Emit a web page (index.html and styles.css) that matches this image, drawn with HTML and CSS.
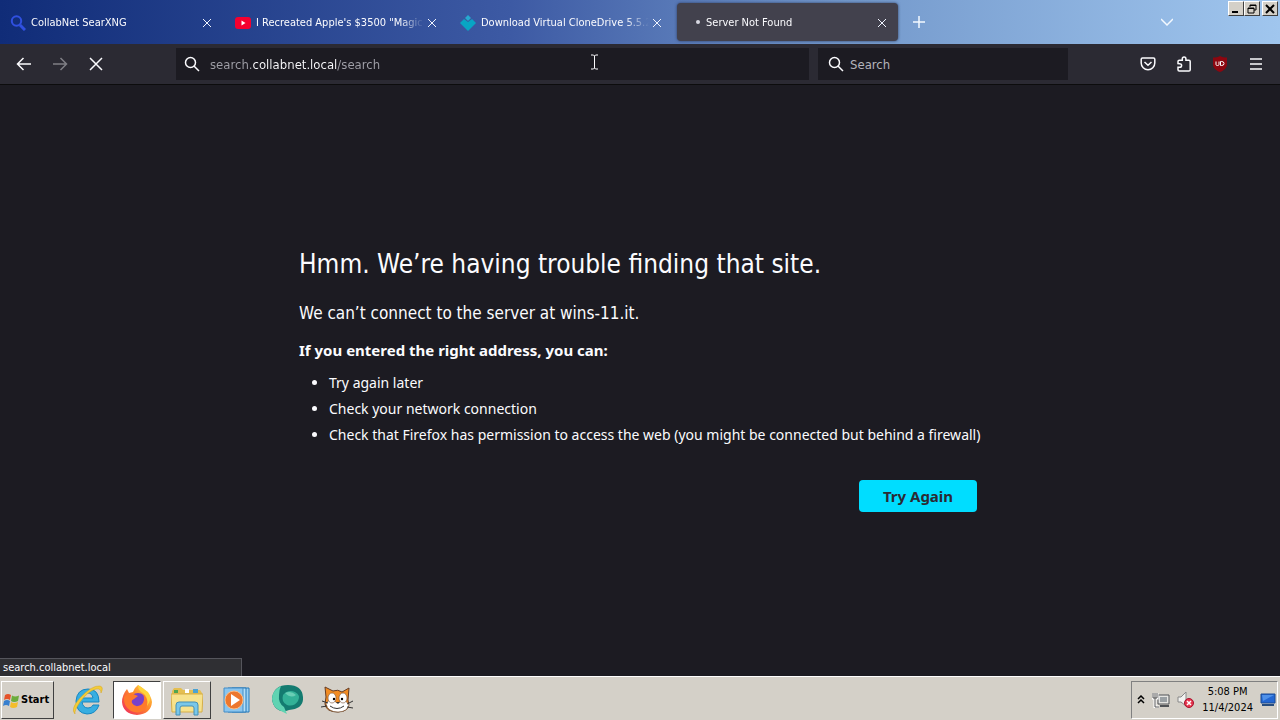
FILE: index.html
```
<!DOCTYPE html>
<html lang="en">
<head>
<meta charset="utf-8">
<title>Server Not Found</title>
<link rel="stylesheet" href="styles.css">
</head>
<body>
<div class="tabbar">
  <div class="tabs">
    <div class="tab">
      <svg class="icon" viewBox="0 0 16 16" fill="none" stroke="#3050e0"><circle cx="6.500" cy="6" r="4.700" stroke-width="2"/><path d="M10 10l5 5" stroke-width="3"/></svg>
      <span class="tab-title">CollabNet SearXNG</span>
      <button class="tab-close" aria-label="Close tab"><svg viewBox="0 0 10 10"><path d="M1 1l8 8M9 1l-8 8"/></svg></button>
    </div>
    <div class="tab">
      <svg class="icon" viewBox="0 0 16 16"><rect y="2" width="16" height="12" rx="3" fill="#f5002f"/><path d="M6.500 5.500v5l4-2.500z" fill="#fff"/></svg>
      <span class="tab-title">I Recreated Apple's $3500 "Magica</span>
      <button class="tab-close" aria-label="Close tab"><svg viewBox="0 0 10 10"><path d="M1 1l8 8M9 1l-8 8"/></svg></button>
    </div>
    <div class="tab">
      <svg class="icon" viewBox="0 0 16 16"><path d="M8 0l3 3-3 3-3-3z" fill="#26a9cf"/><path d="M0 8l4-4 4 3 4-3 4 4-8 8z" fill="#08a5c4"/></svg>
      <span class="tab-title">Download Virtual CloneDrive 5.5.2</span>
      <button class="tab-close" aria-label="Close tab"><svg viewBox="0 0 10 10"><path d="M1 1l8 8M9 1l-8 8"/></svg></button>
    </div>
    <div class="tab active">
      <svg class="icon" viewBox="0 0 16 16"><circle cx="13" cy="7" r="2" fill="#d8d8e2"/></svg>
      <span class="tab-title">Server Not Found</span>
      <button class="tab-close" aria-label="Close tab"><svg viewBox="0 0 10 10"><path d="M1 1l8 8M9 1l-8 8"/></svg></button>
    </div>
  </div>
  <button class="tab-tool" aria-label="New tab"><svg viewBox="0 0 12 12" width="12" height="12"><path d="M6 0v12M0 6h12"/></svg></button>
  <button class="tab-tool all-tabs" aria-label="List all tabs"><svg viewBox="0 0 12 12" width="12" height="12"><path d="M0 3l6 6 6-6"/></svg></button>
  <div class="window-buttons">
    <button aria-label="Minimize"><svg viewBox="0 0 14 12"><path d="M3 9h6" stroke-width="2"/></svg></button>
    <button aria-label="Restore"><svg viewBox="0 0 14 12"><path d="M5 4V2h6v5H9M5 2.500h6M3 5h6v5H3zM3 5.500h6"/></svg></button>
    <button class="win-close" aria-label="Close"><svg viewBox="0 0 14 12"><path d="M3 2l8 8M11 2l-8 8" stroke-width="2"/></svg></button>
  </div>
</div>

<div class="toolbar">
  <button class="tool" aria-label="Back"><svg viewBox="0 0 16 16"><path d="M15 8H1.500M7.500 2l-6 6 6 6"/></svg></button>
  <button class="tool" aria-label="Forward" disabled><svg viewBox="0 0 16 16"><path d="M1 8h13.500M8.500 2l6 6-6 6"/></svg></button>
  <button class="tool" aria-label="Stop"><svg viewBox="0 0 16 16"><path d="M2 2l12 12M14 2L2 14"/></svg></button>
  <div class="spacer"></div>
  <label class="field address">
    <svg viewBox="0 0 16 16"><circle cx="6.500" cy="6.500" r="5"/><path d="M10 10l5 5"/></svg>
    <input class="url" type="text" aria-label="Address" value="search.collabnet.local/search">
    <svg class="ibeam" viewBox="0 0 9 16"><path d="M1 1h2.500l1 1 1-1H8M4.500 2v12M1 15h2.500l1-1 1 1H8"/></svg>
  </label>
  <label class="field searchbox">
    <svg viewBox="0 0 16 16"><circle cx="6.500" cy="6.500" r="5"/><path d="M10 10l5 5"/></svg>
    <input type="text" aria-label="Search" placeholder="Search">
  </label>
  <div class="spacer"></div>
  <button class="tool" aria-label="Save to Pocket"><svg viewBox="0 0 16 16"><path d="M2.500 2h11c.8 0 1.300.5 1.300 1.300V7a6.800 6.800 0 0 1-13.600 0V3.300C1.200 2.500 1.700 2 2.500 2zM4.500 6L8 9.200 11.500 6"/></svg></button>
  <button class="tool" aria-label="Extensions"><svg viewBox="0 0 16 16"><path d="M2 7.500V5.500C2 4.700 2.500 4.200 3.300 4.200H6.300V2.700a1.800 1.800 0 0 1 3.600 0v1.500h3c.8 0 1.300.5 1.300 1.300v8.200c0 .8-.5 1.300-1.300 1.300H3.300c-.8 0-1.300-.5-1.300-1.300V11.300h1.800a1.800 1.800 0 0 0 0-3.600z"/></svg></button>
  <button class="tool" aria-label="uBlock Origin"><svg class="ublock" viewBox="0 0 16 16"><path d="M8 0c2 1.200 4.500 1.500 7 1.500v6.500c0 4-3 6.500-7 8-4-1.500-7-4-7-8V1.500C3.500 1.500 6 1.200 8 0z" fill="#8c0610"/><path d="M4 5.500v3q0 1 1.500 1t1.500-1v-3M8.500 9.500v-4h1.200q2.300 0 2.300 2t-2.300 2z" fill="none" stroke="#fff"/></svg></button>
  <button class="tool" aria-label="Menu"><svg viewBox="0 0 16 16"><path d="M2 3h12M2 8h12M2 13h12"/></svg></button>
</div>

<main class="page">
  <div class="error">
    <h1>Hmm. We’re having trouble finding that site.</h1>
    <p class="lead">We can’t connect to the server at wins-11.it.</p>
    <p class="hint">If you entered the right address, you can:</p>
    <ul>
      <li>Try again later</li>
      <li>Check your network connection</li>
      <li>Check that Firefox has permission to access the web (you might be connected but behind a firewall)</li>
    </ul>
    <button class="retry">Try Again</button>
  </div>
  <div class="status">search.collabnet.local</div>
</main>

<div class="taskbar">
  <button class="start">
    <svg viewBox="0 0 18 18" width="18" height="18"><path d="M2 4q3-2 6 0L7 9Q4 7 1 9z" fill="#e5532a"/><path d="M9 4.500q3 2 7 0L15 10q-4 2-7 0z" fill="#6cac3c"/><path d="M1 10q3-2 6 0l-1 5q-3-2-6 0z" fill="#377fce"/><path d="M8 11q3 2 7 0l-1 5q-4 2-7 0z" fill="#f4bd2c"/></svg>
    Start
  </button>
  <button class="task" aria-label="Internet Explorer"><svg viewBox="0 0 32 32"><path d="M28 18H11q1 6 6 6 4 0 5-3h6q-3 9-12 9Q5 29 5 17 6 5 17 5t11 13zM11 14h11q-1-5-5-5t-6 5z" fill="#38aee1" stroke="#1687c2"/><path d="M4 30Q-1 25 9 14 21 1 29 2q4 1 1 7 0-5-5-4Q17 7 9 18 3 27 4 30z" fill="#f3cc39" stroke="#d6a51c" stroke-width=".5"/></svg></button>
  <button class="task current" aria-label="Firefox"><svg viewBox="0 0 32 32"><defs><linearGradient id="fx" x1="1" y1="0" x2="0" y2="1"><stop offset="0" stop-color="#ffe44a"/><stop offset=".45" stop-color="#ff892b"/><stop offset="1" stop-color="#ed2260"/></linearGradient></defs><path d="M17 1q7 4 9 8 4 2 5 9-1 12-15 13Q2 30 1 18 1 11 6 5l2 4 4-1q1-4 5-7z" fill="url(#fx)"/><circle cx="17" cy="17" r="8" fill="#7941c9"/><path d="M3 13q4-5 9-3l5 2-4 3q-3 1-2 4 3 5 9 2 5-4 2-11 7 6 3 14-6 7-15 3-8-5-7-14z" fill="#ff7a2c"/><path d="M17 1q0 6 5 8 6 4 4 13 6-8 1-14-4-3-10-7z" fill="#ffd53c"/></svg></button>
  <button class="task running" aria-label="File Explorer"><svg viewBox="0 0 32 32"><path d="M1 7l2-3h7l2 2h17l2 3v18H1z" fill="#e5bf51"/><path d="M3 6h4v3H3z" fill="#51a550"/><path d="M14 5h4v4h-4z" fill="#fff"/><path d="M22 5h5v4h-5z" fill="#4ca3d2"/><path d="M0 10h32l-1 18H1z" fill="#f7e28c" stroke="#d5ae48"/><path d="M5 31V21q0-3 3-3h16q3 0 3 3v10h-4v-7q0-2-2-2H11q-2 0-2 2v7z" fill="#79c7e9" stroke="#448fb6"/></svg></button>
  <button class="task" aria-label="Media Player"><svg viewBox="0 0 32 32"><path d="M11 4h17v24H11z" fill="#9bd1f3" stroke="#2579b9"/><path d="M7 4h18v24H7z" fill="#b5dff7" stroke="#2579b9"/><path d="M3 4h19v24H3z" fill="#89c5ef" stroke="#448cc5"/><circle cx="13" cy="16" r="9" fill="#ed772d" stroke="#ffbd83"/><path d="M10 10v12l9-6z" fill="#fff"/></svg></button>
  <button class="task" aria-label="Chat"><svg viewBox="0 0 32 32"><path d="M1 14Q3 1 17 1t15 12-14 13Q11 29 6 25 1 21 1 14z" fill="#147b70"/><path d="M10 2Q1 6 1 15q1 8 7 11l8 4-3-7Q7 19 8 11q0-5 2-9z" fill="#60d3b2"/><path d="M12 11q5-6 12-3 6 3 3 9-4 6-11 4-6-3-4-10z" fill="#33b197"/><path d="M14 9q6-3 11 2-5 4-11-2z" fill="#69ceb5"/></svg></button>
  <button class="task" aria-label="Scratch"><svg viewBox="0 0 32 32"><path d="M5 13L4 3l8 4q5-2 9 1l7-4-1 12q4 11-10 12Q5 28 4 20z" fill="#f28c23" stroke="#653c24"/><path d="M5 20q4-8 11-1 9-5 12 2-2 7-11 7-10 0-12-8z" fill="#fff" stroke="#704826" stroke-width=".6"/><ellipse cx="11" cy="14" rx="4" ry="5" fill="#fff" stroke="#714a30" stroke-width=".6"/><ellipse cx="22" cy="14" rx="4" ry="5" fill="#fff" stroke="#714a30" stroke-width=".6"/><circle cx="13" cy="15" r="1.200"/><circle cx="21" cy="15" r="1.200"/><path d="M15 18h4l-2 2z" fill="#333"/><path d="M9 22q7 5 14 0" fill="none" stroke="#333"/><path d="M1 17l6 2M0 23l6-1M26 20l6-3M26 23l6 1" stroke="#333"/></svg></button>
  <div class="tray">
    <button class="tray-item" aria-label="Show hidden icons"><svg viewBox="0 0 8 10" width="8" height="10" fill="none" stroke="#000" stroke-width="1.500"><path d="M1 4l3-3 3 3M1 8l3-3 3 3"/></svg></button>
    <button class="tray-item" aria-label="Network"><svg viewBox="0 0 18 16" width="18" height="16"><path d="M6 3h11v9H6z" fill="#e5e5e2" stroke="#505357"/><path d="M8 5h7v5H8z" fill="#9aa0a4"/><path d="M8 14h9" stroke="#505357" stroke-width="2"/><path d="M1 1v5h4V1M3 1v14h4" fill="none" stroke="#fff" stroke-width="3"/><path d="M1 1v5h4V1M3 1v14h4" fill="none" stroke="#555"/></svg></button>
    <button class="tray-item" aria-label="Volume muted"><svg viewBox="0 0 18 18" width="18" height="18"><path d="M1 6h3l5-5v14l-5-4H1z" fill="#f2f2f0" stroke="#888"/><circle cx="12" cy="12" r="4.500" fill="#e7354d" stroke="#a6122d"/><path d="M10 10l4 4M14 10l-4 4" stroke="#fff" stroke-width="1.500"/></svg></button>
    <div class="clock"><time>5:08 PM</time><time>11/4/2024</time></div>
    <button class="tray-item" aria-label="Show desktop"><svg viewBox="0 0 16 14" width="16" height="14"><path d="M1 1h14v9H1z" fill="#2467d2" stroke="#184a94"/><path d="M2 2h12L3 8z" fill="#4f91e9"/><path d="M2 12h12" stroke="#284d7e" stroke-width="2"/></svg></button>
  </div>
</div>
</body>
</html>
```
FILE: styles.css
```
* { box-sizing: border-box; }
body {
  margin: 0;
  min-height: 100vh;
  display: flex;
  flex-direction: column;
  background: #1c1b22;
  color: #fbfbfe;
  font-family: Tahoma, "DejaVu Sans Condensed", "Noto Sans", sans-serif;
  font-size: 11px;
}
button, input { font: inherit; color: inherit; border: 0; padding: 0; background: none; }
svg { display: block; flex: none; }

.tabbar {
  display: flex;
  align-items: center;
  height: 44px;
  background: linear-gradient(to right, #102c78, #3d5aa4 40%, #7398cb 66%, #a0c6ee);
}
.tabs { display: flex; gap: 4px; padding-left: 2px; }
.tab {
  display: flex;
  align-items: center;
  width: 221px;
  height: 38px;
  padding: 2px 8px 0;
  border-radius: 4px;
}
.tab.active { background: #42414d; box-shadow: 0 0 3px #2c3c60; }
.icon { width: 16px; height: 16px; }
.tab-title {
  flex: 1;
  margin-left: 5px;
  overflow: hidden;
  white-space: nowrap;
  line-height: 16px;
  mask-image: linear-gradient(to left, transparent, #000 24px);
}
.tab-close { width: 16px; height: 16px; display: grid; place-items: center; }
.tab-close svg { width: 10px; height: 10px; stroke: #f0f4ff; stroke-width: 1; }
.tab-tool { width: 36px; height: 36px; display: grid; place-items: center; margin-left: 3px; }
.tab-tool svg { fill: none; stroke: #f4f9ff; stroke-width: 1.5; }
.all-tabs { margin-left: auto; margin-right: 43px; }
.window-buttons { display: flex; align-self: flex-start; padding: 1px 2px 0 0; }
.window-buttons button {
  width: 16px;
  height: 15px;
  background: #d4d0c8;
  border: 1px solid;
  border-color: #fff #404040 #404040 #fff;
}
.window-buttons .win-close { margin-left: 2px; }
.window-buttons svg { width: 14px; height: 12px; fill: none; stroke: #000; }

.toolbar {
  display: flex;
  align-items: center;
  height: 41px;
  padding: 0 6px;
  background: #2b2a33;
  border-bottom: 1px solid #0c0c0d;
}
.tool { width: 36px; height: 32px; display: grid; place-items: center; }
.tool:disabled { opacity: .4; }
.tool svg, .field svg { width: 16px; height: 16px; fill: none; stroke: #fbfbfe; stroke-width: 1.5; }
.tool .ublock { stroke: none; }
.tool .ublock path { stroke-width: 1; }
.spacer { width: 62px; }
.field { position: relative; display: flex; align-items: center; height: 32px; background: #1c1b22; font-size: 13px; }
.field > svg:first-child { margin: 0 10px 0 8px; }
.address { flex: 1; margin-right: 9px; }
.searchbox { width: 250px; }
.searchbox > svg:first-child { margin: 0 6px 0 10px; }
.field input { flex: 1; min-width: 0; height: 32px; outline: 0; }
.field input::placeholder { color: #b4b4bb; opacity: 1; }
.field .url {
  color: transparent;
  background: linear-gradient(to right, #a0a0a8 42px, #fbfbfe 42px, #fbfbfe 127px, #a0a0a8 127px);
  background-clip: text;
}
.field .ibeam { position: absolute; left: 414px; top: 6px; width: 9px; stroke-width: 1; }

.page { position: relative; flex: 1; display: flex; flex-direction: column; align-items: center; justify-content: center; }
.error { width: 100%; max-width: 682px; padding-bottom: 4px; display: flex; flex-direction: column; }
h1 { margin: 0; font-size: 26px; font-weight: 400; line-height: 36px; }
.lead { margin: 18px 0 0; font-size: 17px; line-height: 26px; }
.hint, ul, .retry { font-family: Tahoma, "Noto Sans", sans-serif; }
.hint { margin: 12px 0 0; font-size: 15px; font-weight: 700; line-height: 24px; }
ul { margin: 8px 0 0; padding-left: 30px; font-size: 14px; line-height: 26px; }
.retry {
  align-self: flex-end;
  width: 118px;
  height: 32px;
  margin: 32px 4px 0 0;
  border-radius: 4px;
  background: #00ddff;
  color: #2b2a33;
  font-size: 15px;
  font-weight: 700;
}
.status {
  position: absolute;
  left: 0;
  bottom: 0;
  width: 242px;
  height: 18px;
  padding-left: 3px;
  line-height: 18px;
  background: #2f2f33;
  border: 1px solid #55555c;
  border-width: 1px 1px 0 0;
}

.taskbar {
  display: flex;
  align-items: center;
  height: 44px;
  padding: 2px 0 0 1px;
  background: #d4d0c8;
  border-top: 1px solid #fff;
  color: #000;
}
.start {
  display: flex;
  align-items: center;
  width: 53px;
  height: 38px;
  margin-right: 9px;
  padding-left: 1px;
  font-weight: 700;
  border: 1px solid;
  border-color: #fff #404040 #404040 #fff;
}
.task { width: 48px; height: 38px; margin-right: 2px; display: grid; place-items: center; border: 1px solid transparent; }
.task svg { width: 32px; height: 32px; }
.running { border-color: #fff #404040 #404040 #fff; }
.current { background: #fff; border-color: #404040 #fff #fff #404040; }
.tray {
  display: flex;
  align-items: center;
  gap: 7px;
  height: 38px;
  margin: 0 2px 0 auto;
  padding: 0 1px 0 5px;
  border: 1px solid;
  border-color: #808080 #fff #fff #808080;
}
.tray-item { display: grid; place-items: center; }
.clock { display: flex; flex-direction: column; align-items: center; line-height: 16px; }
```
